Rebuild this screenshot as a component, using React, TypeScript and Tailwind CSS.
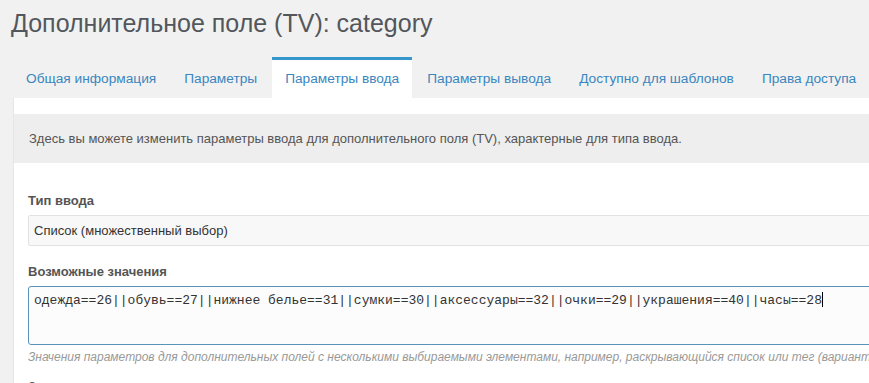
import React from "react";

const tabs = [
  "Общая информация",
  "Параметры",
  "Параметры ввода",
  "Параметры вывода",
  "Доступно для шаблонов",
  "Права доступа",
];

const values =
  "одежда==26||обувь==27||нижнее белье==31||сумки==30||аксессуары==32||очки==29||украшения==40||часы==28";

export default function App(): React.JSX.Element {
  const active = 2;
  return (
    <div className="w-[869px] h-[383px] overflow-hidden bg-[#f1f1f1] font-['Liberation_Sans',Arial,sans-serif]">
      {/* header */}
      <h2 className="pl-[11px] pt-[8px] text-[25px] leading-[30px] text-[#53575c] whitespace-nowrap">
        Дополнительное поле (TV): category
      </h2>

      {/* tabs */}
      <div className="flex mt-[19px] pl-[13px] gap-[2px] whitespace-nowrap">
        {tabs.map((t, i) => (
          <div
            key={t}
            className={
              i === active
                ? "h-[41px] flex items-center px-[13px] border-t-[3px] border-[#3697cd] bg-white text-[13.7px] text-[#3a86bf]"
                : "h-[41px] flex items-center px-[13px] border-t-[3px] border-transparent text-[13.7px] text-[#3a86bf]"
            }
          >
            {t}
          </div>
        ))}
      </div>

      {/* panel */}
      <div className="ml-[13px] w-[1000px] bg-white border-l border-[#e6e6e6] pt-[16px] pb-10">
        <div className="h-[49px] flex items-center px-[15px] bg-[#eeeeee] text-[13px] text-[#555555] whitespace-nowrap">
          Здесь вы можете изменить параметры ввода для дополнительного поля (TV), характерные для типа ввода.
        </div>

        <div className="px-[14px] pt-[29px]">
          <div className="text-[13px] leading-[18px] font-bold text-[#555555]">Тип ввода</div>
          <div className="mt-[5px] h-[31px] flex items-center pl-[5px] bg-[#f8f8f8] border border-[#e2e2e2] rounded-[2px] text-[13px] text-[#333333]">
            Список (множественный выбор)
          </div>

          <div className="mt-[17px] text-[13px] leading-[18px] font-bold text-[#555555]">
            Возможные значения
          </div>
          <div className="mt-[5px] h-[59px] pl-[5px] pt-[5px] bg-[#fcfcfc] border border-[#5a93b8] rounded-[3px] text-[13px] leading-[16px] text-[#333333] font-['Liberation_Mono','Courier_New',monospace] whitespace-nowrap">
            {values}
            <span className="inline-block w-[1px] h-[15px] bg-black align-[-3px]" />
          </div>
          <div className="mt-[4px] text-[12px] leading-[16px] italic text-[#999999] whitespace-nowrap">
            Значения параметров для дополнительных полей с несколькими выбираемыми элементами, например, раскрывающийся список или тег (вариант значения==значение)
          </div>

          <div className="mt-[13px] text-[13px] leading-[18px] font-bold text-[#555555]">
            Значение по умолчанию
          </div>
        </div>
      </div>
    </div>
  );
}
